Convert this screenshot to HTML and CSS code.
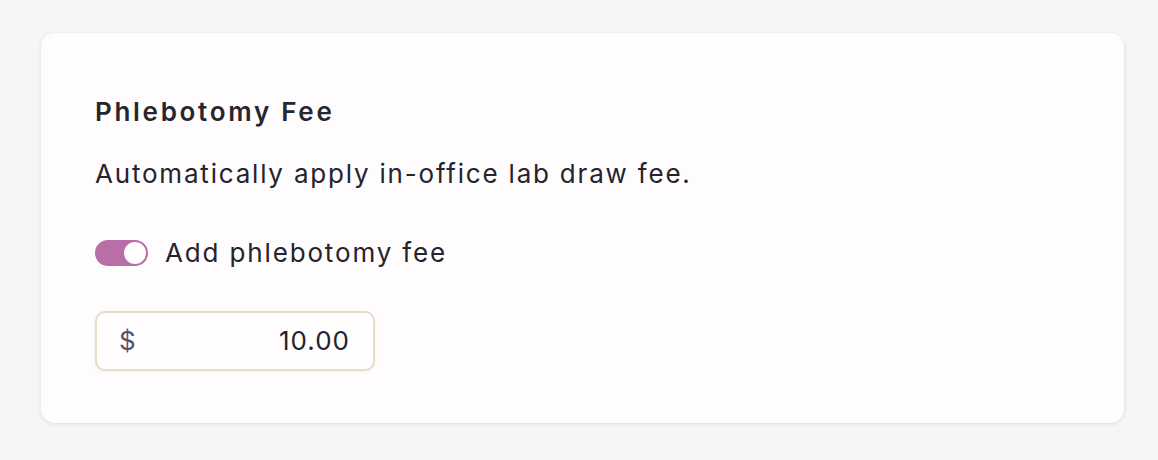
FILE: index.html
```html
<!DOCTYPE html>
<html lang="en">
<head>
<meta charset="utf-8">
<title>Phlebotomy Fee</title>
<link rel="stylesheet" href="styles.css">
</head>
<body>
<main class="page">
  <section class="card">
    <h2 class="title">Phlebotomy Fee</h2>
    <p class="desc">Automatically apply in-office lab draw fee.</p>
    <label class="toggle-row">
      <span class="toggle"><span class="knob"></span></span>
      <span class="toggle-label">Add phlebotomy fee</span>
    </label>
    <div class="money">
      <span class="currency">$</span>
      <span class="amount">10.00</span>
    </div>
  </section>
</main>
</body>
</html>
```
FILE: styles.css
```css
* { box-sizing: border-box; }
html, body { margin: 0; padding: 0; }
body {
  background: #f7f6f4;
  font-family: "Inter", "Open Sans", sans-serif;
  color: #25232c;
}
.page {
  padding: 33px 34px 37px 41px;
}
.card {
  background: #fffcfd;
  border-radius: 14px;
  box-shadow: 0 1px 4px rgba(0, 0, 0, 0.11);
  padding: 64px 54px 52px 54px;
  display: flex;
  flex-direction: column;
  align-items: flex-start;
}
.title {
  margin: 0;
  font-size: 26px;
  font-weight: 600;
  line-height: 30px;
  letter-spacing: 2.7px;
  color: #27252e;
}
.desc {
  margin: 32px 0 0;
  font-size: 26px;
  font-weight: 400;
  line-height: 30px;
  letter-spacing: 1.8px;
}
.toggle-row {
  display: flex;
  align-items: center;
  gap: 17px;
  margin-top: 49px;
}
.toggle {
  width: 53px;
  height: 26px;
  border-radius: 13px;
  background: #b96ea8;
  position: relative;
  display: block;
}
.knob {
  position: absolute;
  right: 2px;
  top: 2px;
  width: 22px;
  height: 22px;
  border-radius: 50%;
  background: #ffffff;
}
.toggle-label {
  font-size: 26px;
  line-height: 30px;
  letter-spacing: 1.85px;
}
.money {
  margin-top: 43px;
  width: 280px;
  height: 60px;
  border: 2px solid #e5dcca;
  border-radius: 10px;
  background: #fffdfd;
  display: flex;
  align-items: center;
  justify-content: space-between;
  padding: 0 23px 0 22px;
  font-size: 26px;
  line-height: 30px;
  box-shadow: 0 1px 3px rgba(0, 0, 0, 0.06);
}
.currency { color: #57536b; }
.amount { color: #25232c; letter-spacing: 1px; }
```
